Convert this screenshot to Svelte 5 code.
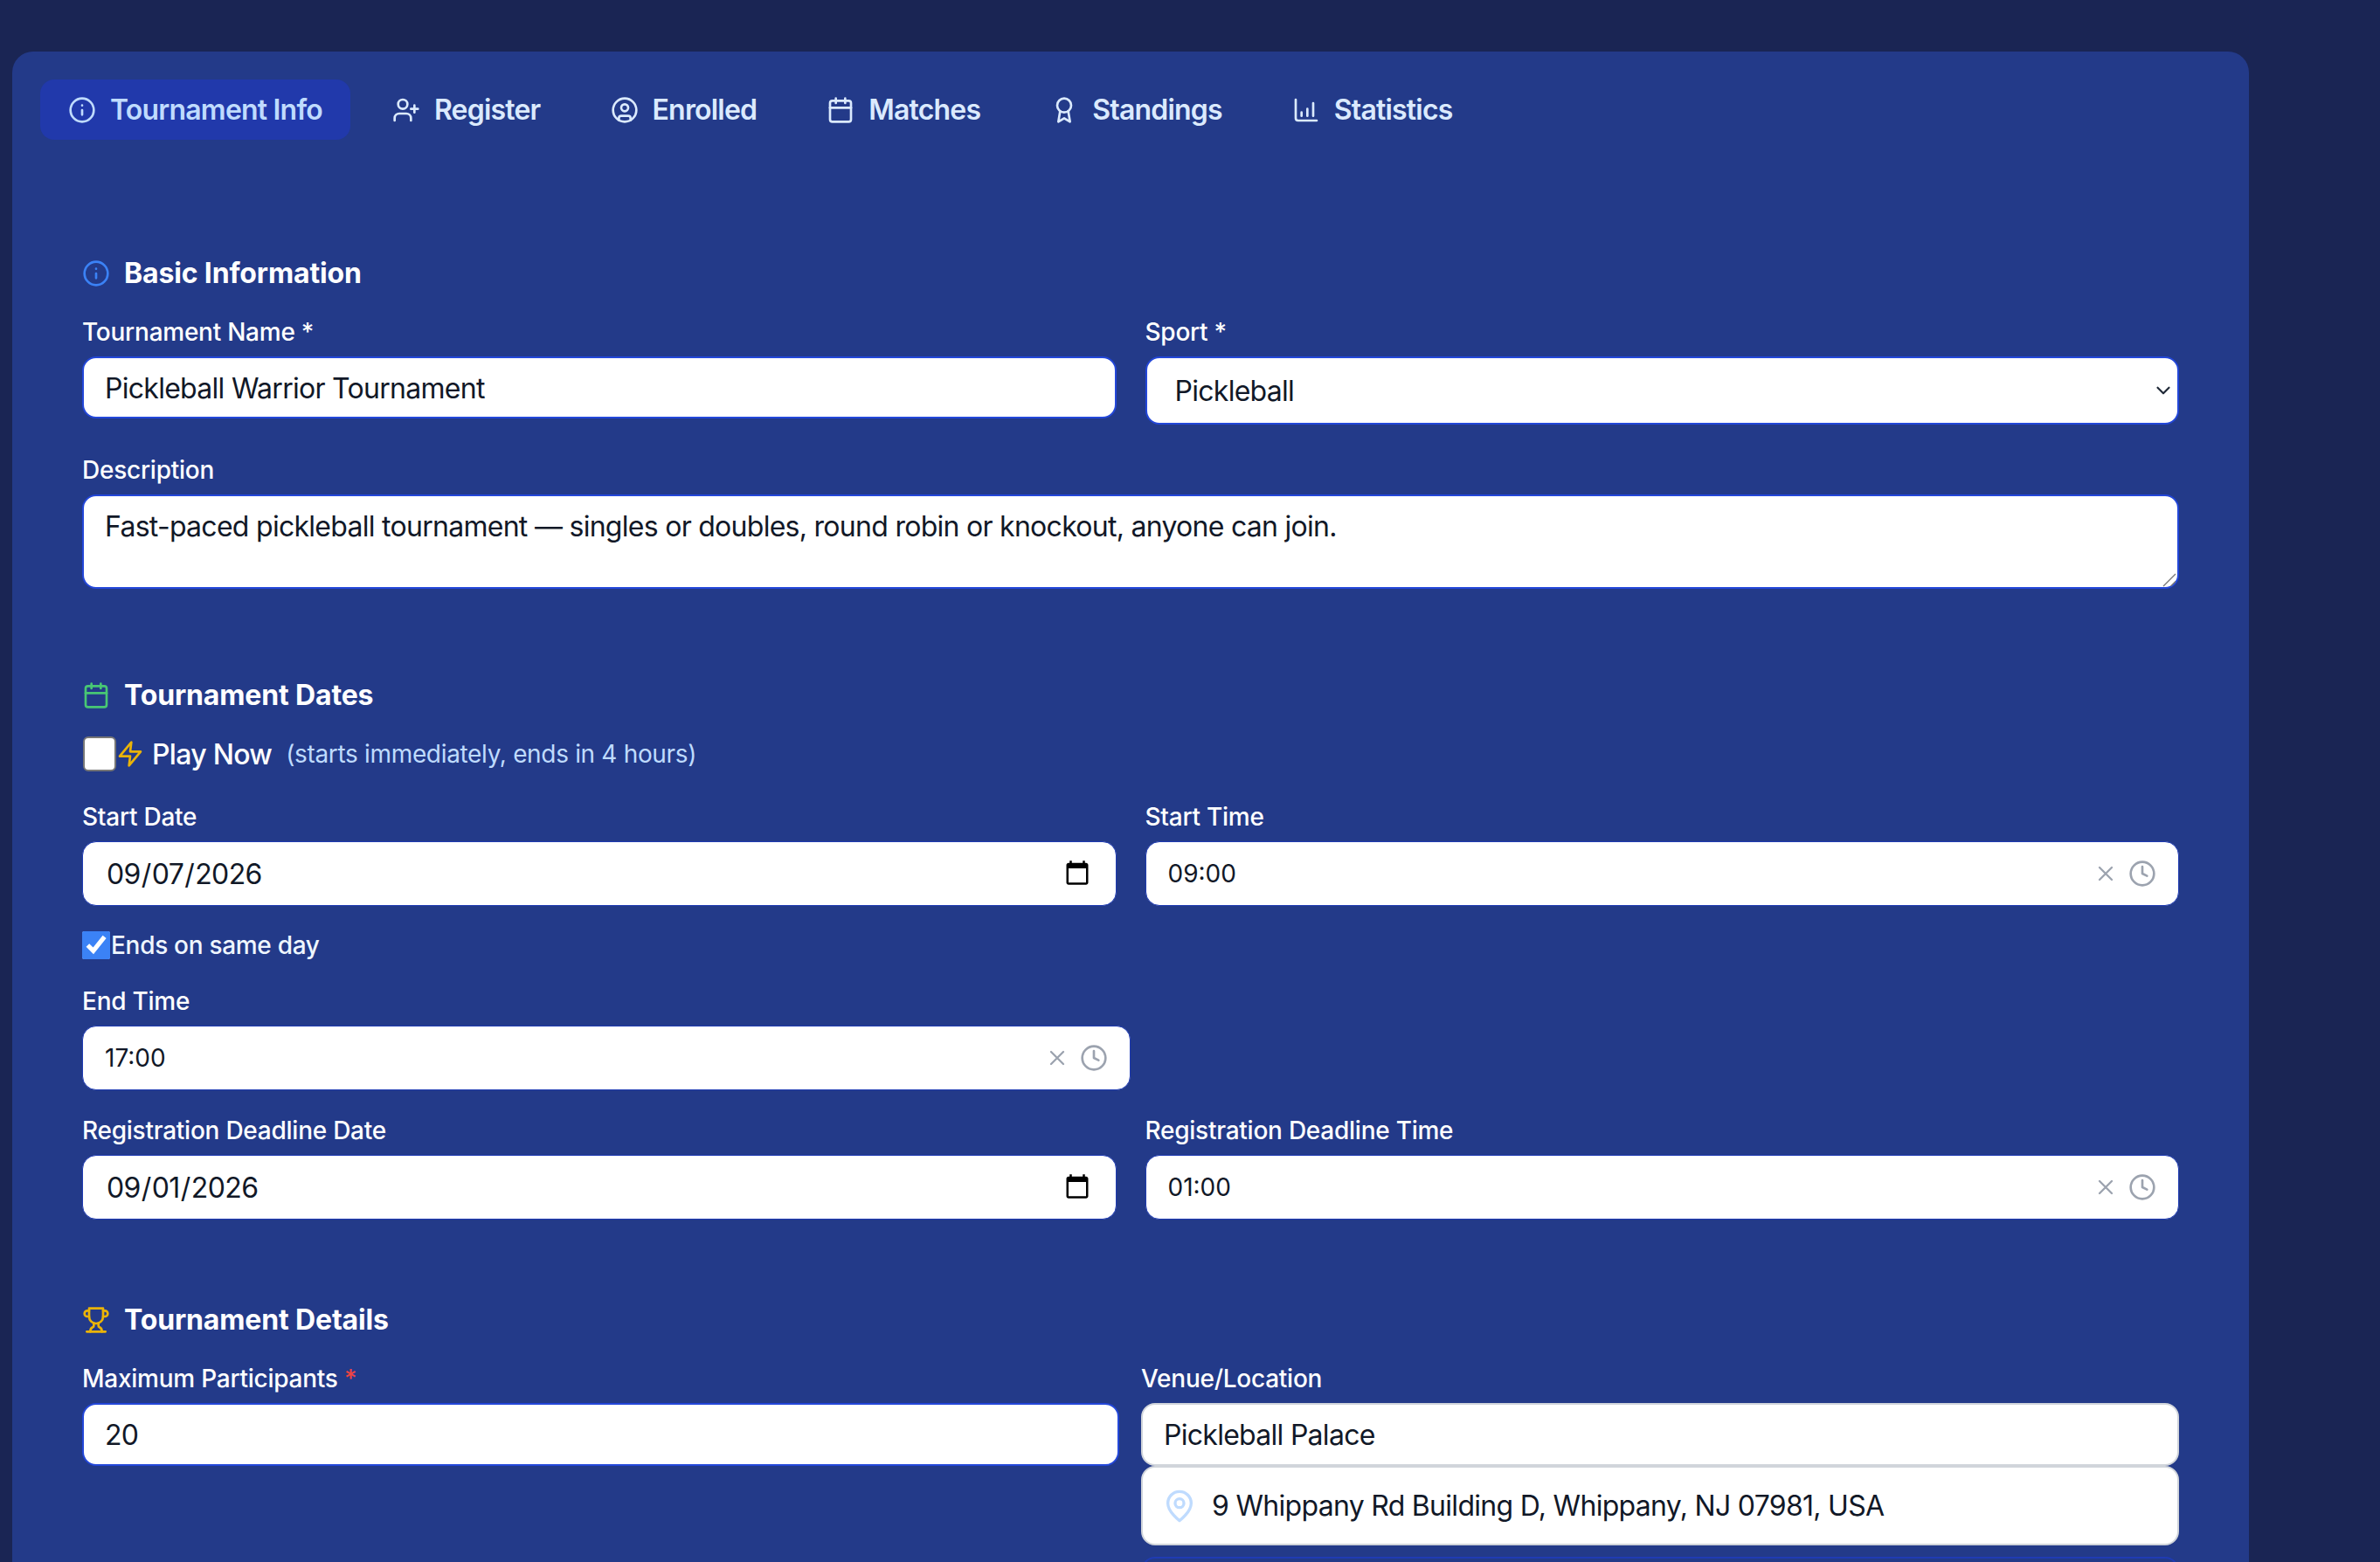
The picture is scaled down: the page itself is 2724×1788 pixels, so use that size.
<script>
const tabs = [
  { key: 'info', label: 'Tournament Info', active: true },
  { key: 'userPlus', label: 'Register' },
  { key: 'userCircle', label: 'Enrolled' },
  { key: 'calendar', label: 'Matches' },
  { key: 'award', label: 'Standings' },
  { key: 'chart', label: 'Statistics' },
]
</script>

{#snippet icon(name, size = 32)}
  <svg class="icon" width={size} height={size} viewBox="0 0 24 24" fill="none" stroke="currentColor" stroke-width="2" stroke-linecap="round" stroke-linejoin="round">
    {#if name === 'info'}
      <circle cx="12" cy="12" r="10"/><path d="M12 16v-4M12 8h.01"/>
    {:else if name === 'userPlus'}
      <path d="M16 21v-2a4 4 0 0 0-4-4H6a4 4 0 0 0-4 4v2"/><circle cx="9" cy="7" r="4"/><path d="M19 8v6M22 11h-6"/>
    {:else if name === 'userCircle'}
      <circle cx="12" cy="12" r="10"/><circle cx="12" cy="10" r="3"/><path d="M7 20.662V19a2 2 0 0 1 2-2h6a2 2 0 0 1 2 2v1.662"/>
    {:else if name === 'calendar'}
      <path d="M8 2v4M16 2v4"/><rect x="3" y="4" width="18" height="18" rx="2"/><path d="M3 10h18"/>
    {:else if name === 'award'}
      <path d="M15.477 12.89 17 22l-5-3-5 3 1.523-9.11"/><circle cx="12" cy="8" r="6"/>
    {:else if name === 'chart'}
      <path d="M3 3v16a2 2 0 0 0 2 2h16"/><path d="M8 17v-3M13 17v-6M18 17V6"/>
    {:else if name === 'zap'}
      <polygon points="13 2 3 14 12 14 11 22 21 10 12 10 13 2"/>
    {:else if name === 'trophy'}
      <path d="M6 9H4.5a2.5 2.5 0 0 1 0-5H6"/><path d="M18 9h1.5a2.5 2.5 0 0 0 0-5H18"/><path d="M4 22h16"/>
      <path d="M10 14.66V17c0 .55-.47.98-.97 1.21C7.85 18.75 7 20.24 7 22"/><path d="M14 14.66V17c0 .55.47.98.97 1.21C16.15 18.75 17 20.24 17 22"/>
      <path d="M18 2H6v7a6 6 0 0 0 12 0V2Z"/>
    {:else if name === 'pin'}
      <path d="M20 10c0 6-8 12-8 12s-8-6-8-12a8 8 0 0 1 16 0Z"/><circle cx="12" cy="10" r="3"/>
    {:else if name === 'x'}
      <path d="M18 6 6 18M6 6l12 12"/>
    {:else if name === 'clock'}
      <circle cx="12" cy="12" r="10"/><path d="M12 6v6l4 2"/>
    {:else if name === 'chevron'}
      <path d="m6 9 6 6 6-6"/>
    {/if}
  </svg>
{/snippet}

{#snippet timeInput(value)}
  <div class="box time">
    <input class="time-value" type="text" {value} readonly />
    <span class="clear">{@render icon('x', 28)}</span>
    <span class="clock">{@render icon('clock', 32)}</span>
  </div>
{/snippet}

<div class="page">
  <main class="card">
    <nav class="tabs">
      {#each tabs as tab}
        <button class="tab" class:active={tab.active}>
          {@render icon(tab.key)}
          {tab.label}
        </button>
      {/each}
    </nav>

    <section class="first">
      <h2><span class="blue">{@render icon('info')}</span>Basic Information</h2>
      <div class="grid">
        <div class="field">
          <label for="name">Tournament Name *</label>
          <input id="name" class="box text" type="text" value="Pickleball Warrior Tournament" />
        </div>
        <div class="field">
          <label for="sport">Sport *</label>
          <div class="select-wrap">
            <select id="sport" class="box select"><option>Pickleball</option></select>
            <span class="chevron">{@render icon('chevron', 26)}</span>
          </div>
        </div>
      </div>
      <div class="field desc">
        <label for="desc">Description</label>
        <div class="area-wrap">
          <textarea id="desc" class="box area">Fast-paced pickleball tournament — singles or doubles, round robin or knockout, anyone can join.</textarea>
          <svg class="grip" width="16" height="16" viewBox="0 0 16 16" stroke="#777" stroke-width="1.4"><path d="M1 15 15 1M9.5 15 15 9.5"/></svg>
        </div>
      </div>
    </section>

    <section class="dates">
      <h2><span class="green">{@render icon('calendar')}</span>Tournament Dates</h2>
      <div class="play">
        <input class="play-check" type="checkbox" />
        <span class="yellow">{@render icon('zap')}</span>
        <span class="play-label">Play Now</span>
        <span class="play-note">(starts immediately, ends in 4 hours)</span>
      </div>
      <div class="grid row">
        <div class="field">
          <label for="start-date">Start Date</label>
          <input id="start-date" class="box date" type="date" value="2026-09-07" />
        </div>
        <div class="field">
          <span class="label">Start Time</span>
          {@render timeInput('09:00')}
        </div>
      </div>
      <label class="same-day"><input type="checkbox" checked />Ends on same day</label>
      <div class="field end-time">
        <span class="label">End Time</span>
        {@render timeInput('17:00')}
      </div>
      <div class="grid row deadline">
        <div class="field">
          <label for="reg-date">Registration Deadline Date</label>
          <input id="reg-date" class="box date" type="date" value="2026-09-01" />
        </div>
        <div class="field">
          <span class="label">Registration Deadline Time</span>
          {@render timeInput('01:00')}
        </div>
      </div>
    </section>

    <section class="details">
      <h2><span class="yellow">{@render icon('trophy')}</span>Tournament Details</h2>
      <div class="grid narrow">
        <div class="field">
          <label for="max">Maximum Participants <span class="req">*</span></label>
          <input id="max" class="box number" type="text" value="20" />
        </div>
        <div class="field">
          <label for="venue">Venue/Location</label>
          <input id="venue" class="box number grey" type="text" value="Pickleball Palace" />
          <div class="address">
            <span class="pin">{@render icon('pin', 40)}</span>
            9 Whippany Rd Building D, Whippany, NJ 07981, USA
          </div>
          <div class="box next"></div>
        </div>
      </div>
    </section>
  </main>
</div>

<style>
:global(body) { margin: 0; background: #1a2554; }
.page { height: 1788px; overflow: hidden; padding: 59px 0 0 14px; box-sizing: border-box; font-family: Inter, "Noto Sans", sans-serif; color: #fff; }
.card { width: 2560px; height: 1800px; box-sizing: border-box; padding: 32px 80px 0 80px; background: #233a89; border-radius: 24px; position: relative; }
.icon { display: block; flex-shrink: 0; }

.tabs { display: flex; gap: 16px; margin-left: -48px; }
.tab { display: flex; align-items: center; gap: 16px; height: 69px; padding: 0 32px; border: 0; border-radius: 16px; background: transparent; color: #dbeafe; font: 600 32px Inter, sans-serif; letter-spacing: -0.8px; }
.tab.active { background: #2139ab; color: #bfdbfe; }

section.first { margin-top: 133px; }
section.dates { margin-top: 102px; }
section.details { margin-top: 95px; }
h2 { display: flex; align-items: center; gap: 16px; height: 40px; margin: 0; font-size: 32px; font-weight: 700; line-height: 40px; letter-spacing: -0.15px; color: #fff; }
.blue { color: #3b82f6; }
.green { color: #48c774; }
.yellow { color: #eab308; }

.grid { display: grid; grid-template-columns: 1fr 1fr; column-gap: 33px; margin-top: 27px; align-items: start; }
.grid.row { margin-top: 32px; }
.grid.row.deadline { margin-top: 26px; }
.grid.narrow { column-gap: 25px; grid-template-columns: 1187px 1188px; margin-top: 27px; }
.field { display: flex; flex-direction: column; }
.desc { margin-top: 32px; }
label, .label { display: block; height: 40px; line-height: 40px; margin-bottom: 8px; font-size: 28px; font-weight: 550; letter-spacing: -0.25px; color: #fff; }
.req { color: #ef4444; }

.box { box-sizing: border-box; width: 100%; margin: 0; border: 2px solid #2347d9; border-radius: 16px; background: #fff; color: #111827; font: 400 32px Inter, sans-serif; letter-spacing: -0.72px; outline: none; }
.text { height: 71px; padding: 2px 24px 0; }
.select-wrap { position: relative; }
.select { height: 78px; padding: 0 32px; appearance: none; }
.chevron { position: absolute; right: 5px; top: 26px; color: #1f2937; }
.area-wrap { position: relative; }
.area { display: block; height: 108px; padding: 15px 24px; line-height: 40px; resize: none; }
.grip { position: absolute; right: 3px; bottom: 2px; }
.date { height: 74px; padding: 0 28px 0 26px; border-width: 1px; border-color: #1f3bb3; letter-spacing: -0.6px; }
.date::-webkit-calendar-picker-indicator { width: 32px; height: 32px; padding: 0; margin: 0; }
.time { display: flex; align-items: center; height: 74px; padding: 0 25px 0 25px; border-width: 1px; border-color: #1f3bb3; }
.time-value { flex: 1; min-width: 0; border: 0; padding: 0; outline: none; background: transparent; font: 400 28px Inter, sans-serif; color: #111827; }
.clear { color: #9ca3af; margin-right: 12px; }
.clock { color: #9ca3af; }

.play { display: flex; align-items: center; margin-top: 27px; height: 40px; }
.play-check { appearance: none; box-sizing: border-box; width: 38px; height: 40px; margin: 0 0 0 1px; border: 2px solid #767676; border-radius: 6px; background: #fff; }
.play-label { margin-left: 9px; font-size: 32px; font-weight: 550; letter-spacing: -0.7px; }
.play-note { margin-left: 16px; font-size: 28px; letter-spacing: -0.33px; color: #bfdbfe; }

.same-day { display: flex; align-items: center; margin: 29px 0 0; height: 32px; line-height: 32px; font-size: 28px; letter-spacing: -0.3px; color: #eff6ff; }
.same-day input { width: 32px; height: 32px; margin: 0 1px 0 0; accent-color: #3b82f6; }
.end-time { width: 1200px; margin-top: 28px; }

.number { height: 72px; padding: 0 24px; }
.grey { border-color: #d1d5db; }
.address { display: flex; align-items: center; gap: 17px; box-sizing: border-box; height: 91px; padding: 0 24px; border: 2px solid #d1d5db; border-radius: 16px; background: #fff; color: #111827; font-size: 32px; letter-spacing: -0.7px; }
.pin { color: #bfdbfe; margin-left: -2px; }
.next { height: 72px; margin-top: 13px; border-color: #1f3bb3; background: transparent; }
</style>
